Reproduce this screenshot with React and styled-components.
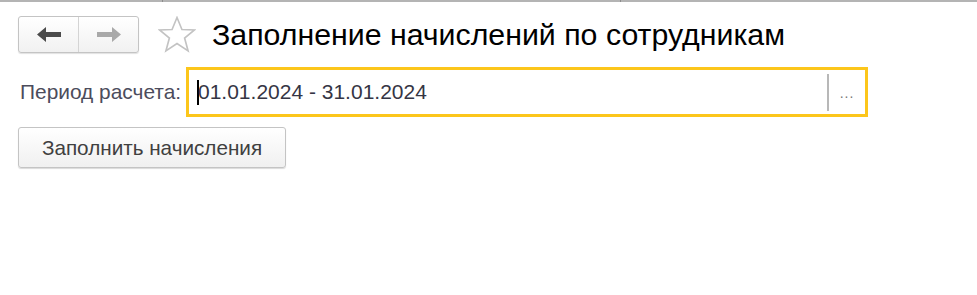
import React from 'react';
import styled, { createGlobalStyle } from 'styled-components';

const GlobalStyle = createGlobalStyle`
  html, body {
    margin: 0;
    padding: 0;
    background: #ffffff;
    font-family: "Liberation Sans", Arial, sans-serif;
  }
`;

const Page = styled.div`
  width: 977px;
  height: 295px;
  background: #fff;
  overflow: hidden;
`;

const TopLine = styled.div`
  height: 2px;
  background: #b4b4b4;
  display: flex;
`;

const TopSeg = styled.div`
  width: ${props => props.w}px;
  border-right: 1px solid #8c8c8c;
`;

const Content = styled.div`
  padding: 14px 0 0 18px;
`;

const Header = styled.div`
  display: flex;
  align-items: center;
  height: 37px;
`;

const NavGroup = styled.div`
  display: flex;
  width: 121px;
  height: 37px;
  box-sizing: border-box;
  border: 1px solid #c4c4c4;
  border-radius: 3px;
  background: linear-gradient(#ffffff, #f1f1f1);
  box-shadow: 0 1px 1px rgba(0, 0, 0, 0.12);
`;

const NavButton = styled.div`
  flex: 1;
  display: flex;
  align-items: center;
  justify-content: center;
  & + & {
    border-left: 1px solid #d4d4d4;
  }
`;

const StarWrap = styled.div`
  margin-left: 19px;
  width: 38px;
  height: 37px;
  display: flex;
  align-items: center;
  justify-content: center;
`;

const Title = styled.h1`
  margin: 0 0 0 16px;
  font-size: 30.3px;
  font-weight: normal;
  color: #000;
  line-height: 37px;
  white-space: nowrap;
`;

const FieldRow = styled.div`
  display: flex;
  align-items: center;
  margin-top: 14px;
`;

const Label = styled.div`
  margin-left: 2px;
  width: 166px;
  font-size: 20.9px;
  color: #4c4c5c;
  white-space: nowrap;
`;

const InputBox = styled.div`
  width: 682px;
  height: 50px;
  box-sizing: border-box;
  border: 3px solid #fcc61b;
  display: flex;
  align-items: center;
  background: #fff;
`;

const InputText = styled.div`
  flex: 1;
  display: flex;
  align-items: center;
  padding-left: 8px;
  font-size: 21px;
  color: #353544;
  white-space: nowrap;
`;

const Caret = styled.span`
  display: inline-block;
  width: 2px;
  height: 25px;
  background: #000;
  margin-right: -1px;
`;

const Divider = styled.div`
  width: 2px;
  height: 37px;
  background: #b8b8b8;
`;

const ChoiceButton = styled.div`
  width: 36px;
  text-align: center;
  font-size: 14px;
  color: #777;
  letter-spacing: 1px;
  padding-top: 2px;
`;

const ActionButton = styled.div`
  margin-top: 10px;
  width: 268px;
  height: 41px;
  box-sizing: border-box;
  border: 1px solid #c4c4c4;
  border-radius: 3px;
  background: linear-gradient(#ffffff, #f0f0f0);
  box-shadow: 0 1px 1px rgba(0, 0, 0, 0.15);
  display: flex;
  align-items: center;
  justify-content: center;
  font-size: 20.7px;
  color: #404040;
  white-space: nowrap;
`;

const Arrow = ({ dir, color }) => (
  <svg width="24" height="15" viewBox="0 0 24 15"
    style={{ transform: dir === 'right' ? 'scaleX(-1)' : 'none' }}>
    <polygon points="0,7.5 9,0 9,5 24,5 24,10 9,10 9,15" fill={color} />
  </svg>
);

const Star = () => (
  <svg width="38" height="37" viewBox="0 0 37 36">
    <polygon
      points="18.5,1.5 23.3,13.2 35.5,13.6 25.9,21.4 29.3,34 18.5,26.8 7.7,34 11.1,21.4 1.5,13.6 13.7,13.2"
      fill="none"
      stroke="#c3c3c3"
      strokeWidth="1.6"
      strokeLinejoin="miter"
    />
  </svg>
);

export default function App() {
  return (
    <Page>
      <GlobalStyle />
      <TopLine>
        <TopSeg w={162} />
        <TopSeg w={457} />
      </TopLine>
      <Content>
        <Header>
          <NavGroup>
            <NavButton><Arrow dir="left" color="#4b4b4b" /></NavButton>
            <NavButton><Arrow dir="right" color="#a9a9a9" /></NavButton>
          </NavGroup>
          <StarWrap><Star /></StarWrap>
          <Title>Заполнение начислений по сотрудникам</Title>
        </Header>
        <FieldRow>
          <Label>Период расчета:</Label>
          <InputBox>
            <InputText><Caret />01.01.2024 - 31.01.2024</InputText>
            <Divider />
            <ChoiceButton>...</ChoiceButton>
          </InputBox>
        </FieldRow>
        <ActionButton>Заполнить начисления</ActionButton>
      </Content>
    </Page>
  );
}
